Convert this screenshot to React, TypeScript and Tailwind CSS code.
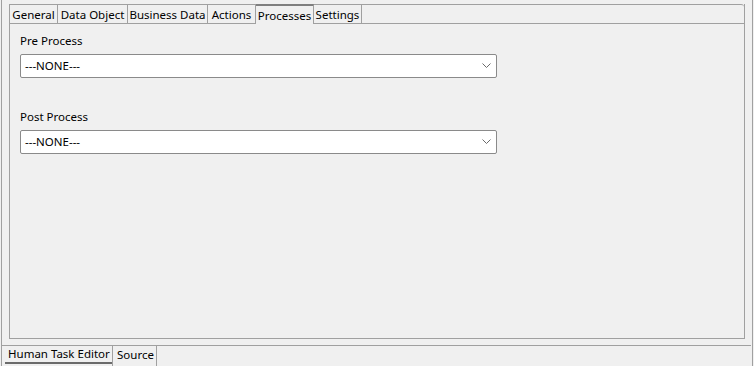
import React from "react";

const tabs = [
  { label: "General", w: "w-[48px]" },
  { label: "Data Object", w: "w-[70px]" },
  { label: "Business Data", w: "w-[80px]" },
  { label: "Actions", w: "w-[48px]" },
  { label: "Processes", w: "w-[58px]", selected: true },
  { label: "Settings", w: "w-[48px]" },
];

function Combo() {
  return (
    <div className="w-[477px] h-[24px] bg-white border border-[#8a8a8a] rounded-[2px] flex items-center pl-[4px] pr-[4px]">
      <span className="flex-1 text-[11.5px] leading-[16px] text-black whitespace-nowrap">---NONE---</span>
      <svg width="10" height="6" viewBox="0 0 10 6" className="mb-[1px]">
        <polyline points="0.5,0.5 4.5,4.5 8.5,0.5" fill="none" stroke="#6a6a6a" strokeWidth="1" />
      </svg>
    </div>
  );
}

export default function App() {
  return (
    <div
      className="w-[754px] h-[366px] bg-[#f0f0f0] overflow-hidden text-black"
      style={{ fontFamily: '"Noto Sans", "Open Sans", sans-serif' }}
    >
      <div className="ml-[1px] w-[752px] h-full border-x border-[#a0a0a0] flex flex-col">
        <div className="ml-[7px] mt-[4px] w-[736px] h-[335px] border-x border-b border-[#a0a0a0] flex flex-col">
          <div className="h-[20px] flex">
            {tabs.map((t) =>
              t.selected ? (
                <div
                  key={t.label}
                  className={`${t.w} h-[20px] border-t-2 border-t-[#7f7f7f] border-r border-r-[#a0a0a0] flex items-center justify-center text-[11.5px] leading-[16px] pt-[1px] whitespace-nowrap`}
                >
                  {t.label}
                </div>
              ) : (
                <div
                  key={t.label}
                  className={`${t.w} h-[20px] border-t border-b border-r border-[#a0a0a0] flex items-center justify-center text-[11.5px] leading-[16px] pt-[1px] whitespace-nowrap`}
                >
                  {t.label}
                </div>
              )
            )}
            <div className="flex-1 h-[20px] border-t border-b border-[#a0a0a0] rounded-tr-[3px]" />
          </div>
          <div className="flex flex-col pl-[10px] pt-[9px]">
            <div className="text-[11.5px] leading-[16px] whitespace-nowrap">Pre Process</div>
            <div className="mt-[5px]">
              <Combo />
            </div>
            <div className="mt-[31px] text-[11.5px] leading-[16px] whitespace-nowrap">Post Process</div>
            <div className="mt-[5px]">
              <Combo />
            </div>
          </div>
        </div>
        <div className="mt-[6px] mr-[1px] border-t border-[#a0a0a0] h-[21px] flex">
          <div className="ml-[3px] w-[107px] h-[18px] border-b-2 border-[#6b6b6b] pl-[3px] flex items-center text-[11.5px] leading-[16px] whitespace-nowrap">
            Human Task Editor
          </div>
          <div className="w-[45px] h-[20px] border-x border-[#a0a0a0] pl-[4px] flex items-center text-[11.5px] leading-[16px] pb-[2px] whitespace-nowrap">
            Source
          </div>
        </div>
      </div>
    </div>
  );
}
